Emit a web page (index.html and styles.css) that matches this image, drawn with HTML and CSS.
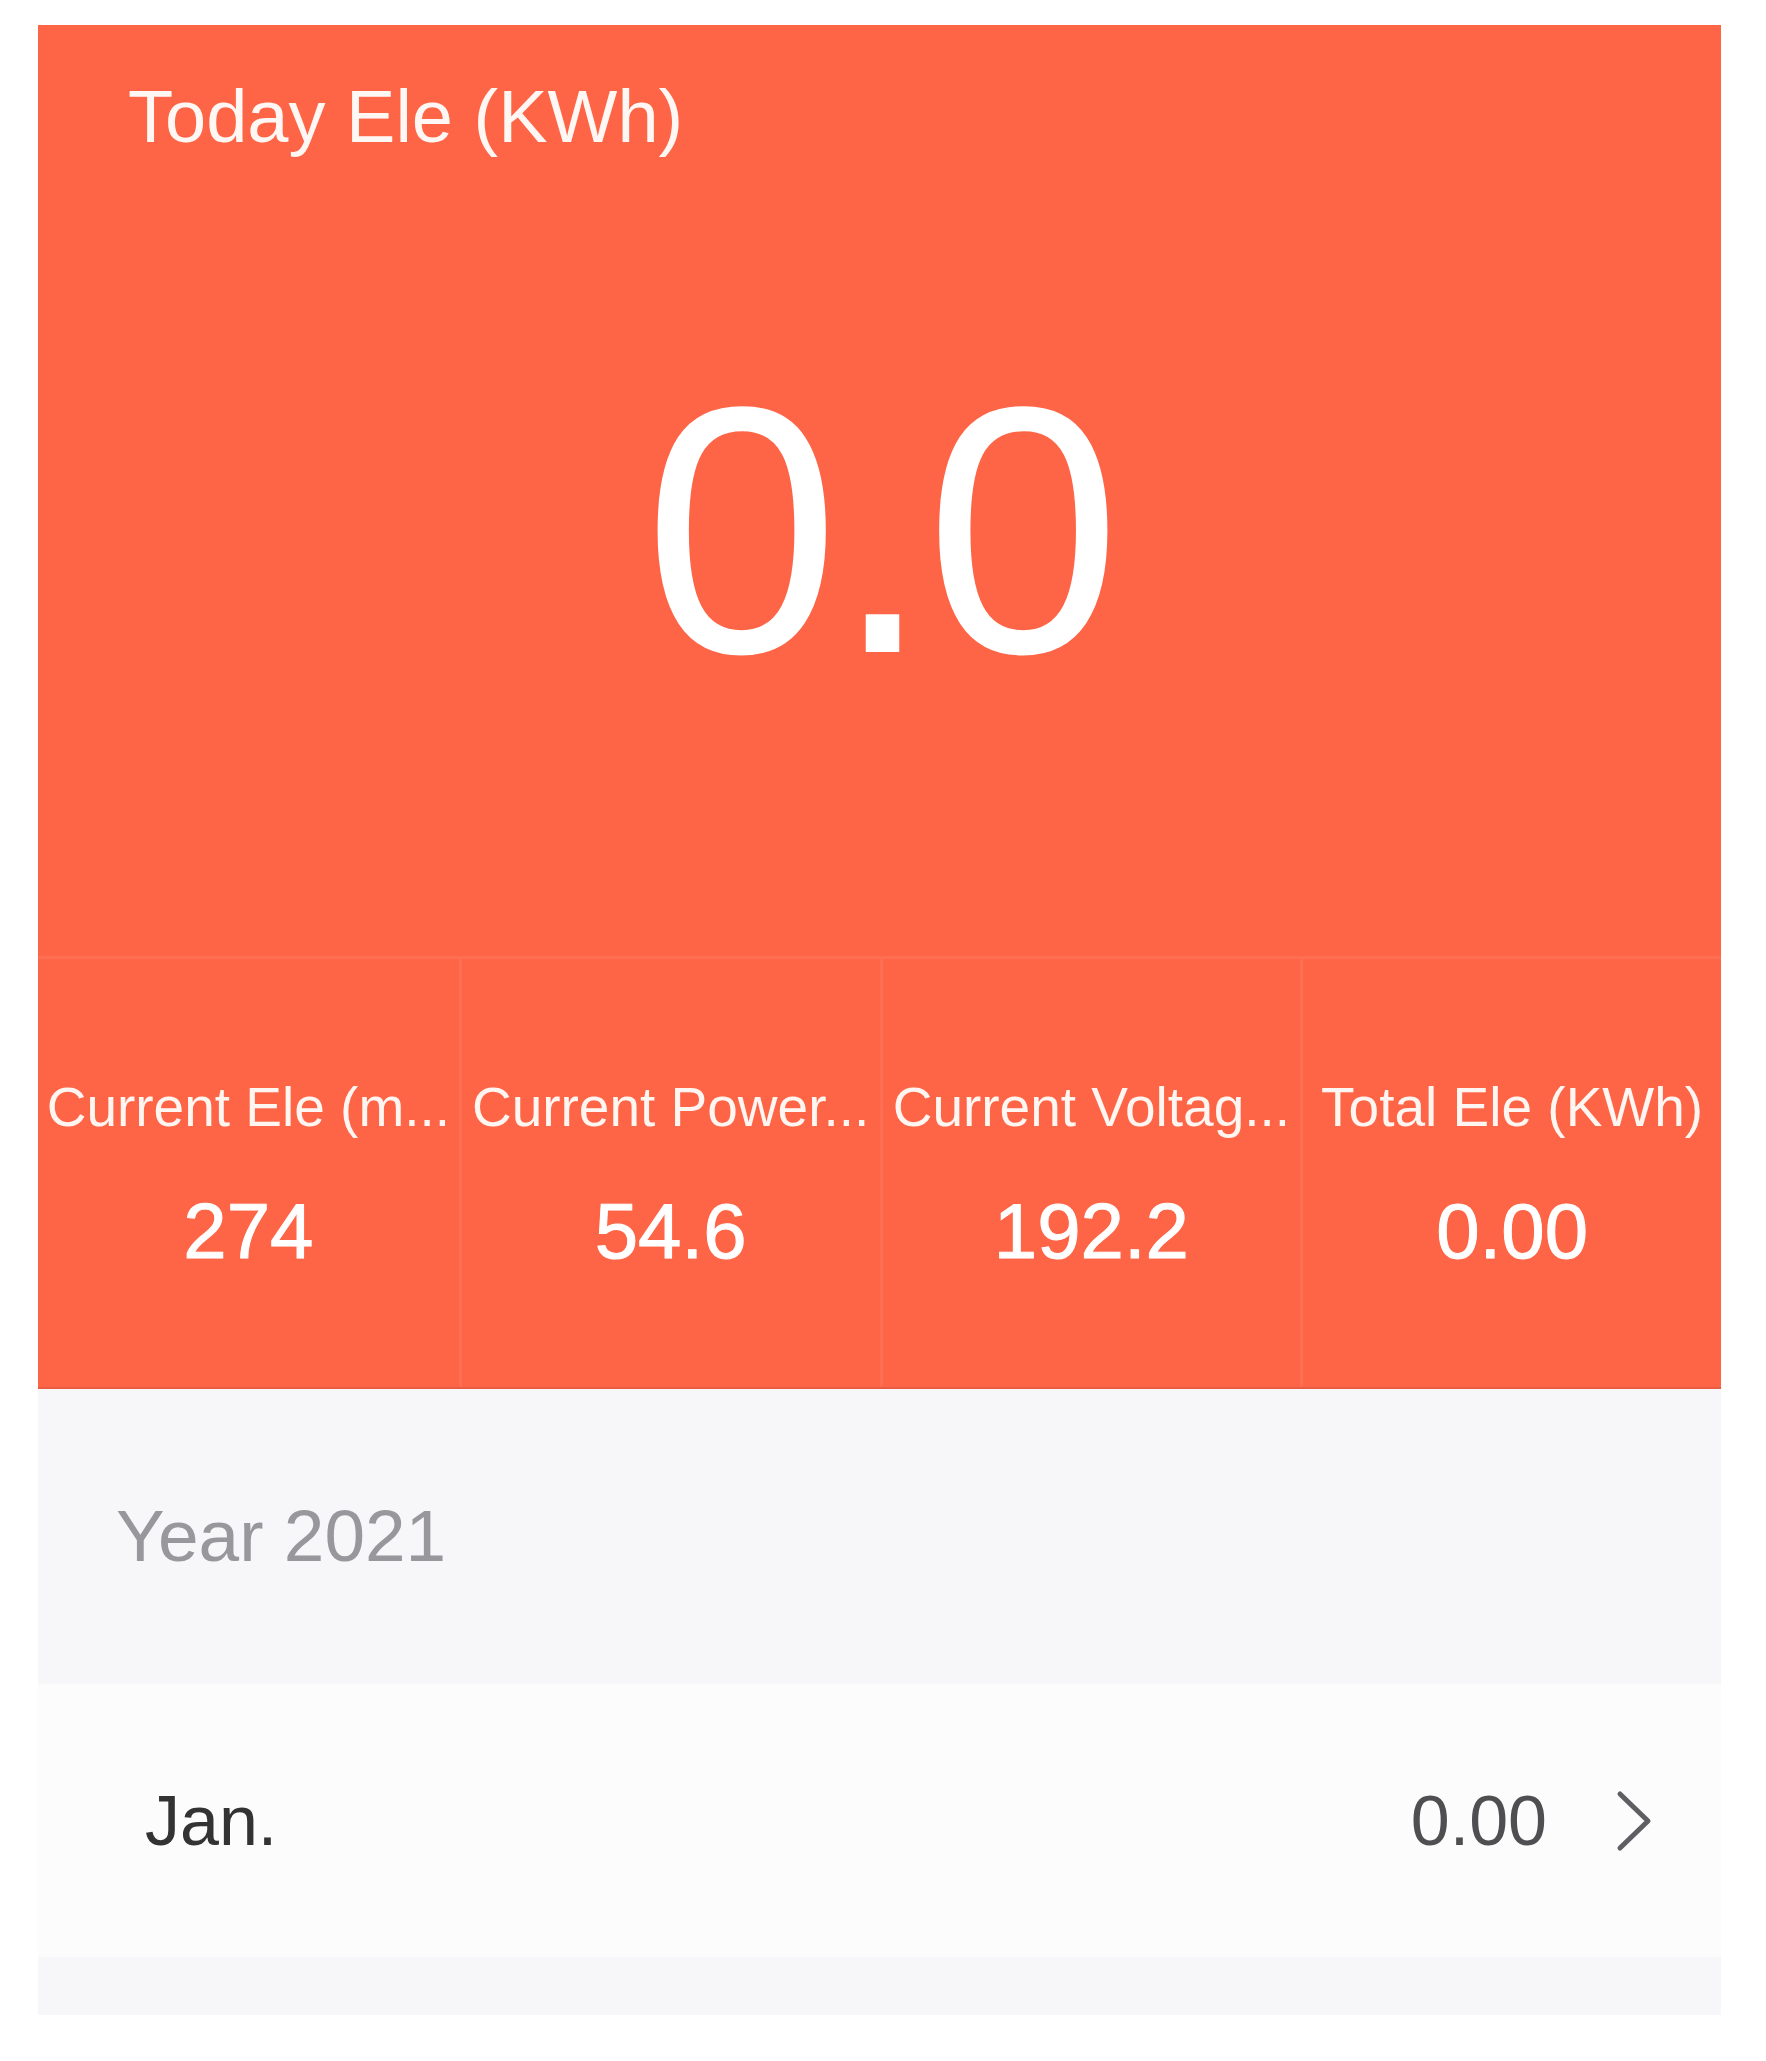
FILE: index.html
```html
<!DOCTYPE html>
<html lang="en">
<head>
  <meta charset="UTF-8"/>
  <meta name="viewport" content="width=device-width, initial-scale=1.0"/>
  <title>Electricity Statistics</title>
  <link rel="stylesheet" href="styles.css">
</head>
<body>
<main class="screen">
  <!-- Today's usage panel -->
  <section class="panel">
    <div class="hero">
      <h1 class="hero-title">Today Ele (KWh)</h1>
      <p class="hero-value">0.0</p>
    </div>

    <!-- Live readings (labels shortened as the app shows them) -->
    <div class="stats">
      <div class="stat">
        <p class="stat-label" title="Current Ele (mA)">Current Ele (m...</p>
        <p class="stat-value">274</p>
      </div>
      <div class="stat">
        <p class="stat-label" title="Current Power (W)">Current Power...</p>
        <p class="stat-value">54.6</p>
      </div>
      <div class="stat">
        <p class="stat-label" title="Current Voltage (V)">Current Voltag...</p>
        <p class="stat-value">192.2</p>
      </div>
      <div class="stat">
        <p class="stat-label">Total Ele (KWh)</p>
        <p class="stat-value">0.00</p>
      </div>
    </div>
  </section>

  <!-- Monthly history -->
  <section class="history">
    <h2 class="year">Year 2021</h2>
    <a class="month" href="#">
      <span class="month-name">Jan.</span>
      <span class="month-value">0.00</span>
      <svg class="chevron" width="36" height="62" viewBox="0 0 36 62" fill="none">
        <polyline points="4,4 32,31 4,58" stroke="#5f5f63" stroke-width="5" stroke-linecap="round" stroke-linejoin="round"/>
      </svg>
    </a>
    <div class="spacer"></div>
  </section>
</main>
</body>
</html>
```

FILE: styles.css
```css
/* Page */
body {
    margin: 0;
    background: #ffffff;
    font-family: "Liberation Sans", Arial, sans-serif;
}

.screen {
    width: 1683px;
    margin: 25px 0 0 38px;
}

p, h1, h2 {
    margin: 0;
    font-weight: normal;
}

/* Orange panel */
.panel {
    background: #fe6446;
    color: #ffffff;
    border-bottom: 2px solid #ea5c40;
}

.hero {
    padding: 55px 0 250px;
}

.hero-title {
    font-size: 74px;
    line-height: 1;
    padding-left: 90px;
    color: #fff7f3;
}

.hero-value {
    margin-top: 200px;
    font-size: 352px;
    line-height: 1;
    text-align: center;
    letter-spacing: -6px;
}

/* Four readings in a row */
.stats {
    display: grid;
    grid-template-columns: repeat(4, 1fr);
    border-top: 3px solid rgba(255, 255, 255, 0.07);
}

.stat {
    padding: 121px 0 117px;
    text-align: center;
    min-width: 0;
}

.stat + .stat {
    border-left: 3px solid rgba(255, 255, 255, 0.07);
}

.stat-label {
    font-size: 55px;
    line-height: 1;
    white-space: nowrap;
    color: #fff5f1;
}

.stat-value {
    margin-top: 57px;
    font-size: 78px;
    line-height: 1;
    -webkit-text-stroke: 1px #ffffff;
}

/* History list */
.history {
    background: #f7f7f9;
}

.year {
    padding: 110px 0 112px 78px;
    font-size: 73px;
    line-height: 1;
    color: #98989c;
}

.month {
    display: flex;
    align-items: center;
    height: 273px;
    padding: 0 69px 0 107px;
    background: #fcfcfd;
    color: #333333;
    text-decoration: none;
}

.month-name {
    flex: 1;
    font-size: 70px;
    line-height: 1;
}

.month-value {
    font-size: 70px;
    line-height: 1;
    color: #4f4f52;
    margin-right: 69px;
}

.spacer {
    height: 58px;
}
```
